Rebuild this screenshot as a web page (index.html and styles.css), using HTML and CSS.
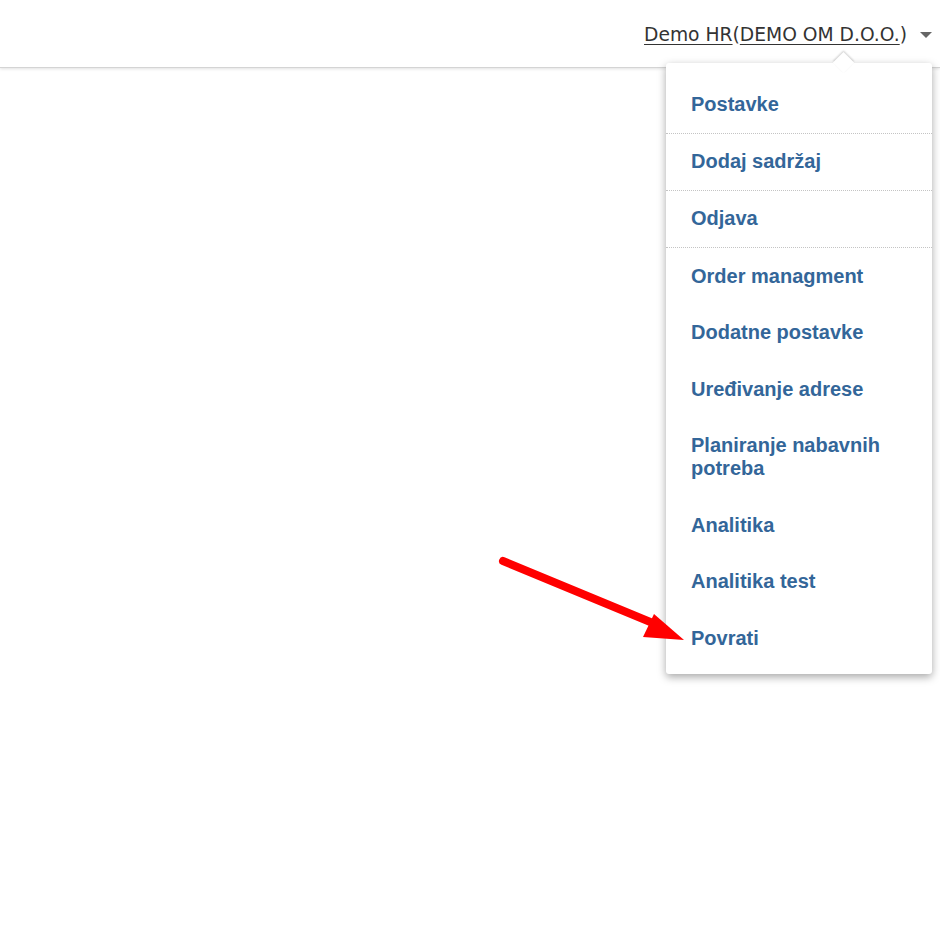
FILE: index.html
```html
<!DOCTYPE html>
<html lang="hr">
<head>
  <meta charset="UTF-8" />
  <meta name="viewport" content="width=device-width, initial-scale=1.0" />
  <title>Demo HR</title>
  <link rel="stylesheet" href="styles.css">
</head>
<body>
  <div class="page">
    <div class="topbar">
      <div class="user-box">
        <a href="#" class="user-link">Demo HR</a>(<a href="#" class="user-link">DEMO OM D.O.O.</a>)
        <svg class="caret" width="12" height="6" viewBox="0 0 12 6"><polygon points="0,0 12,0 6,6" fill="#666"/></svg>
      </div>
    </div>

    <ul class="user-menu">
      <li class="sep"><a href="#">Postavke</a></li>
      <li class="sep"><a href="#">Dodaj sadržaj</a></li>
      <li class="sep"><a href="#">Odjava</a></li>
      <li><a href="#">Order managment</a></li>
      <li><a href="#">Dodatne postavke</a></li>
      <li><a href="#">Uređivanje adrese</a></li>
      <li><a href="#">Planiranje nabavnih potreba</a></li>
      <li><a href="#">Analitika</a></li>
      <li><a href="#">Analitika test</a></li>
      <li><a href="#">Povrati</a></li>
    </ul>

    <!-- annotation arrow -->
    <svg class="annotation" width="200" height="100" viewBox="495 553 200 100">
      <line x1="503" y1="561" x2="660" y2="626" stroke="#ff0000" stroke-width="8" stroke-linecap="round"/>
      <polygon points="684,640 643,637 654,614" fill="#ff0000"/>
    </svg>
  </div>
</body>
</html>
```

FILE: styles.css
```css
body {
  margin: 0;
  font-family: "Liberation Sans", Arial, sans-serif;
  background: #fff;
  color: #333;
}
.page {
  position: relative;
  min-height: 950px;
}
.topbar {
  height: 67px;
  display: flex;
  justify-content: flex-end;
  align-items: center;
  padding-right: 8px;
  border-bottom: 1px solid #d4d4d4;
  box-shadow: 0 1px 3px rgba(0, 0, 0, 0.12);
}
.user-box {
  display: flex;
  align-items: center;
  font-family: "DejaVu Sans", Verdana, sans-serif;
  font-size: 18.7px;
  color: #333;
  padding-top: 2px;
}
.user-link {
  color: #333;
  text-decoration: underline;
  text-underline-offset: 3px;
  text-decoration-thickness: 1px;
}
.caret {
  margin-left: 13px;
}
.user-menu {
  position: absolute;
  top: 63px;
  right: 8px;
  width: 266px;
  margin: 0;
  padding: 14px 0 7px;
  list-style: none;
  background: #fff;
  border-radius: 3px;
  box-shadow: 0 3px 9px rgba(0, 0, 0, 0.35);
  z-index: 20;
}
.user-menu::before {
  content: "";
  position: absolute;
  top: -8px;
  left: 170px;
  width: 15px;
  height: 15px;
  background: #fff;
  transform: rotate(45deg);
  box-shadow: -1px -1px 2px rgba(0, 0, 0, 0.18);
}
.user-menu li.sep {
  border-bottom: 1px dotted #c4c4c4;
}
.user-menu a {
  display: block;
  padding: 16.5px 20px 17px 25px;
  font-size: 20px;
  font-weight: bold;
  line-height: 23px;
  color: #336699;
  text-decoration: none;
}
.user-menu li.sep a {
  padding-top: 16px;
}
.annotation {
  position: absolute;
  top: 553px;
  left: 495px;
  z-index: 30;
  pointer-events: none;
}
```
